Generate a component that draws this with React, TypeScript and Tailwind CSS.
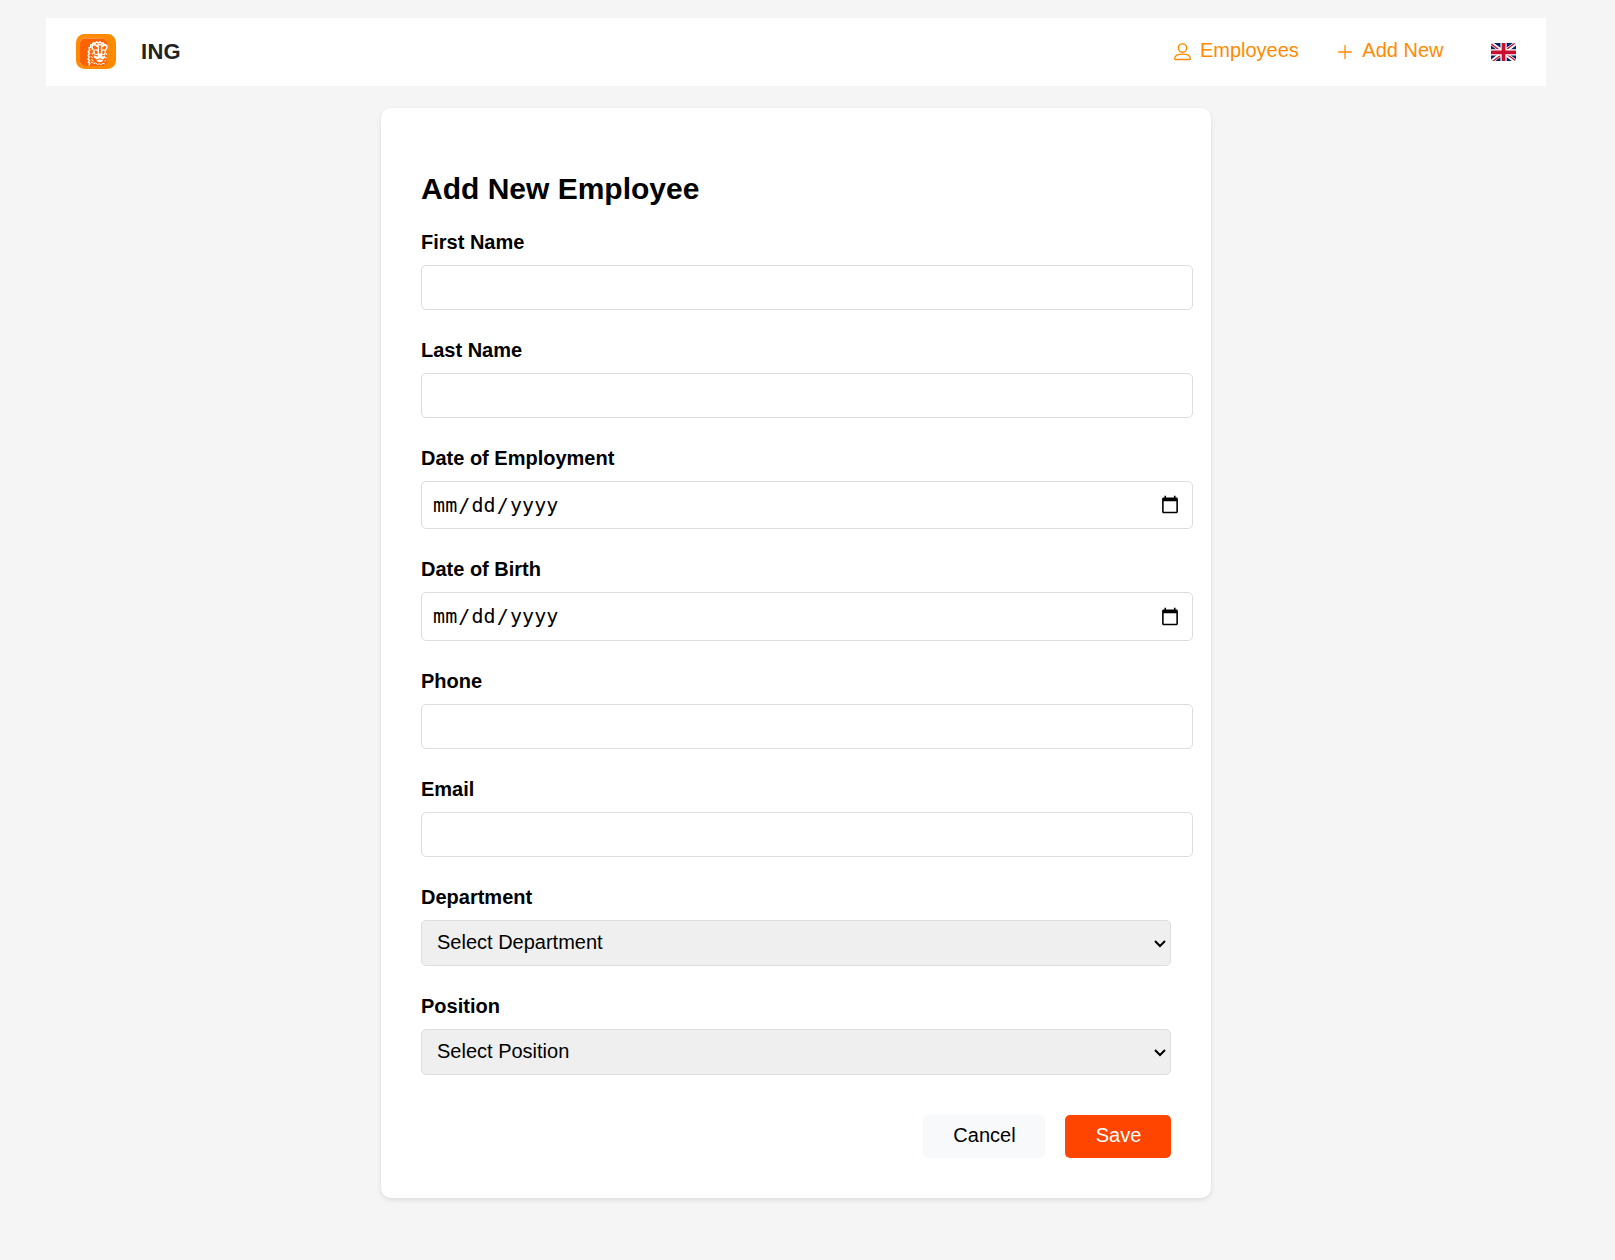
import type { ReactNode } from "react";

const TEXT_CONTROL =
  "box-border w-[772px] rounded-[5px] border border-[#dddddd] bg-white pr-[10px] pl-[10px] text-[20px] text-black outline-none";

function LionLogo() {
  return (
    <svg className="mb-[1px] h-[35px] w-[40px]" viewBox="0 0 40 35" fill="none">
      <rect width="40" height="35" rx="8.5" fill="#ff8a00" />
      <rect x="4" y="4" width="27" height="28" rx="4.5" fill="#ff6200" />
      <path d="M4.3 8.2Q4.6 4.7 8 4.3H27Q30.2 4.5 30.8 7.5" stroke="#ffc08a" strokeWidth=".6" />
      <path d="M4.3 28.5Q4.7 31.3 7 31.8" stroke="#ffc08a" strokeWidth=".6" />
      <path
        d="M13 31.5l.7-2-1.3-1.4 1.1-1.5-1.4-1.7 1.2-1.6-1.2-2 1.3-1.5-1.1-2.2 1.4-1.3-.7-2.4 1.6-.7.1-2.4 1.8-.2.8-1.8 1.8.5 1.6-1.4 1.5 1.1 1.8-1.1 1.6 1.4 1.9-.2.8 1.9 1.4.9"
        stroke="#fff"
        strokeWidth="1.5"
      />
      <path
        d="M17.3 15.5c-2-1.2-1.8-4.6.6-4.8 1.5-.2 2.5.6 2.8 1.8M27 12.5c.3-1.3 1.3-1.9 2.5-1.7 1.9.4 1.9 3.3.2 4.5"
        stroke="#fff"
        strokeWidth="1.5"
      />
      <path
        d="M20.5 12.5q1-2 3.5-2t3.3 2M22.3 12v8.5M25.6 12v8.5M17.5 15.5l.8 4.5M29.6 15.3l-.6 4.7"
        stroke="#fff"
        strokeWidth="1.5"
      />
      <path
        d="M18.5 16.3q1.8-1 3.2.4M26.2 16.6q1.3-1.3 3-.3M18.6 20.3l3.2.2M26.2 20.5l2.8-.2"
        stroke="#fff"
        strokeWidth="1.2"
      />
      <path
        d="M22.3 19.5h3.3l1 3.3 2.6-1.6.3 1.8-2.3 2.5-3.2-1.3-3.6 1.4-2.8-2.6.3-1.8 3.4 1.5z"
        fill="#fff"
      />
      <path d="M20.3 26.3q3.5-1.6 7 0-.8 1.9-3.4 1.9t-3.6-1.9z" fill="#fff" />
      <path
        d="M16 18.5l.5 2M14.9 22l1.7 2M15.3 25.5l2.3 1.5M14.8 28.8l1.6-.8 1.5 1.7 1.7-.9 1.8 1.9 2-1 1.8 1 1.8-1.5 1.8.8M30 19l.4 2M30.2 23l-.4 2.2M28.6 27l1.5-.3"
        stroke="#fff"
        strokeWidth="1"
      />
    </svg>
  );
}

function PersonIcon() {
  return (
    <svg className="h-[18px] w-[17px]" viewBox="0 0 17 18" fill="none" stroke="#ff8a00" strokeWidth="1.35">
      <circle cx="8.5" cy="5" r="4.2" />
      <path d="M1.5 16.5h14q.8 0 .8-.8c0-3-3.1-4.6-7.8-4.6S.7 12.7.7 15.7q0 .8.8.8z" />
    </svg>
  );
}

function PlusIcon() {
  return (
    <svg className="h-[14px] w-[14px]" viewBox="0 0 14 14" fill="none" stroke="#ff8a00" strokeWidth="1.3">
      <path d="M7 .6v12.8M.6 7h12.8" strokeLinecap="round" />
    </svg>
  );
}

function BritishFlag() {
  return (
    <svg className="h-[18.75px] w-[25px] rounded-[3px]" viewBox="0 0 640 480">
      <path fill="#012169" d="M0 0h640v480H0z" />
      <path
        fill="#fff"
        d="m75 0 244 181L562 0h78v62L400 241l240 178v61h-80L320 301 81 480H0v-60l239-178L0 64V0z"
      />
      <path
        fill="#c8102e"
        d="m424 281 216 159v40L369 281zm-184 20 6 35L54 480H0zM640 0v3L391 191l2-44L590 0zM0 0l239 176h-60L0 42z"
      />
      <path fill="#fff" d="M241 0v480h160V0zM0 160v160h640V160z" />
      <path fill="#c8102e" d="M0 193v96h640v-96zM273 0v480h96V0z" />
    </svg>
  );
}

function Field({ label, children }: { label: string; children: ReactNode }) {
  return (
    <label className="flex flex-col items-start">
      <span className="h-[33px] text-[20px] leading-[20px] font-bold">{label}</span>
      {children}
    </label>
  );
}

function Select({ placeholder }: { placeholder: string }) {
  return (
    <span className="relative flex">
      <select className="box-border h-[46px] w-[750px] appearance-none rounded-[5px] border border-[#dddddd] bg-[#efefef] pr-[30px] pb-[2px] pl-[15px] text-[20px] text-black outline-none">
        <option>{placeholder}</option>
      </select>
      <svg
        className="pointer-events-none absolute top-[20px] right-[5px] h-[8px] w-[12px]"
        viewBox="0 0 12 8"
        fill="none"
        stroke="#000"
        strokeWidth="2"
      >
        <path d="M1 1l5 5 5-5" />
      </svg>
    </span>
  );
}

export default function App() {
  return (
    <div className="min-h-[1260px] bg-[#f5f5f5] pt-[18px] font-['Liberation_Sans',Arial,sans-serif] text-black">
      <header className="ml-[46px] flex h-[68px] w-[1500px] items-center justify-between bg-white px-[30px]">
        <div className="flex items-center gap-[25px]">
          <LionLogo />
          <span className="text-[22px] leading-[24px] font-bold tracking-[0.3px] text-[#222222]">ING</span>
        </div>
        <nav className="flex items-center text-[20px] leading-[23px] text-[#ff8a00]">
          <a className="flex items-center gap-[9px]">
            <PersonIcon />
            <span className="mb-[3px]">Employees</span>
          </a>
          <a className="ml-[39.5px] flex items-center gap-[10px]">
            <PlusIcon />
            <span className="mb-[3px]">Add New</span>
          </a>
          <span className="ml-[47.5px]">
            <BritishFlag />
          </span>
        </nav>
      </header>

      <main className="mt-[22px] ml-[381px] h-[1090px] w-[830px] rounded-[10px] bg-white px-[40px] pt-[63px] shadow-[0_2px_5px_rgba(0,0,0,0.1)]">
        <h1 className="h-[61px] text-[30px] leading-[36px] font-bold">Add New Employee</h1>
        <form className="flex flex-col gap-[30px]">
          <Field label="First Name">
            <input type="text" className={`${TEXT_CONTROL} h-[45px]`} />
          </Field>
          <Field label="Last Name">
            <input type="text" className={`${TEXT_CONTROL} h-[45px]`} />
          </Field>
          <Field label="Date of Employment">
            <input type="date" className={`${TEXT_CONTROL} h-[48px] font-[monospace] tracking-[0.1px]`} />
          </Field>
          <Field label="Date of Birth">
            <input
              type="date"
              className={`${TEXT_CONTROL} h-[49px] pb-px font-[monospace] tracking-[0.1px] [&::-webkit-calendar-picker-indicator]:mt-px`}
            />
          </Field>
          <Field label="Phone">
            <input type="tel" className={`${TEXT_CONTROL} h-[45px]`} />
          </Field>
          <Field label="Email">
            <input type="email" className={`${TEXT_CONTROL} h-[45px]`} />
          </Field>
          <Field label="Department">
            <Select placeholder="Select Department" />
          </Field>
          <Field label="Position">
            <Select placeholder="Select Position" />
          </Field>
          <div className="mt-[10px] flex justify-end gap-[20px] text-[20px] leading-[23px]">
            <button type="button" className="h-[43px] w-[122px] rounded-[5px] bg-[#f8f9fa] pb-[2px] pl-px">
              Cancel
            </button>
            <button type="button" className="h-[43px] w-[106px] rounded-[5px] bg-[#ff4500] pb-[2px] pl-px text-white">
              Save
            </button>
          </div>
        </form>
      </main>
    </div>
  );
}
